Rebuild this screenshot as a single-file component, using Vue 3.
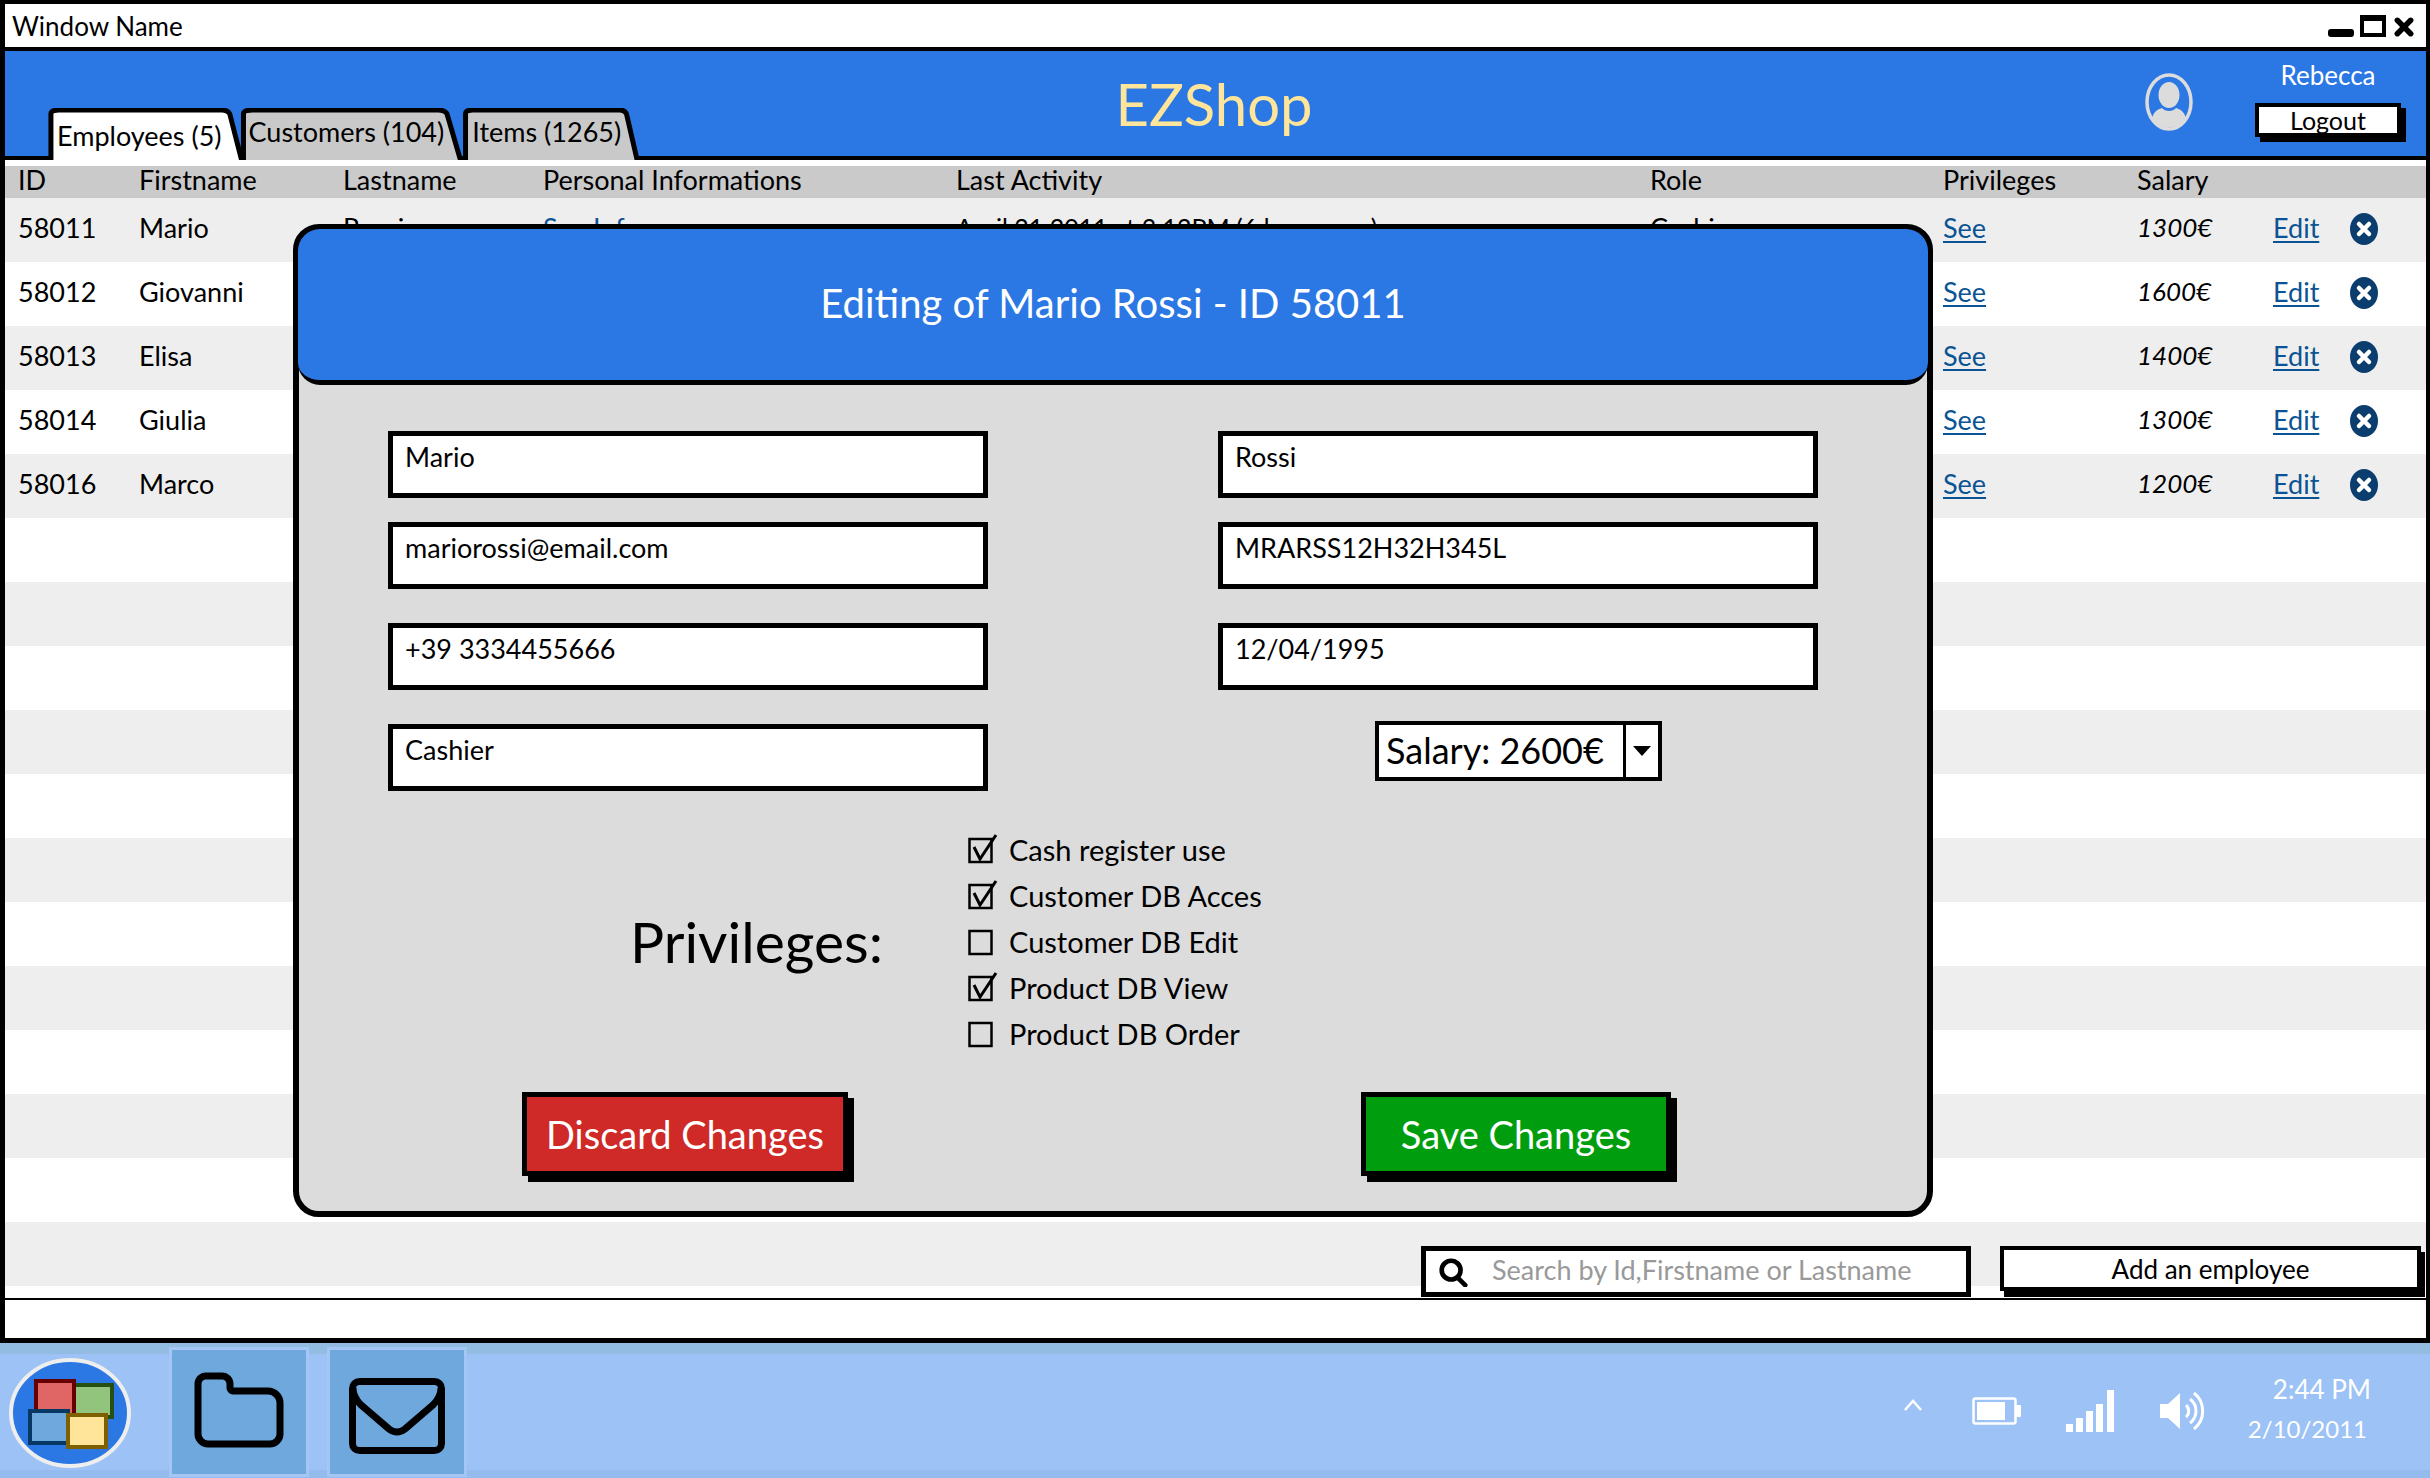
<script setup>
import { ref } from 'vue'

const tabs = ref([
  { label: 'Employees (5)', active: true },
  { label: 'Customers (104)', active: false },
  { label: 'Items (1265)', active: false }
])

const columns = ['ID', 'Firstname', 'Lastname', 'Personal Informations', 'Last Activity', 'Role', 'Privileges', 'Salary', '', '']

const employees = ref([
  { id: '58011', first: 'Mario', last: 'Rossi', info: 'See Info', activity: 'April 21 2011 at 3:12PM (6 hours ago)', role: 'Cashier', salary: '1300€' },
  { id: '58012', first: 'Giovanni', last: '', info: '', activity: '', role: '', salary: '1600€' },
  { id: '58013', first: 'Elisa', last: '', info: '', activity: '', role: '', salary: '1400€' },
  { id: '58014', first: 'Giulia', last: '', info: '', activity: '', role: '', salary: '1300€' },
  { id: '58016', first: 'Marco', last: '', info: '', activity: '', role: '', salary: '1200€' }
])

const emptyRows = 12

const fields = ['Mario', 'Rossi', 'mariorossi@email.com', 'MRARSS12H32H345L', '+39 3334455666', '12/04/1995', 'Cashier']

const privileges = ref([
  { label: 'Cash register use', checked: true },
  { label: 'Customer DB Acces', checked: true },
  { label: 'Customer DB Edit', checked: false },
  { label: 'Product DB View', checked: true },
  { label: 'Product DB Order', checked: false }
])
</script>

<template>
  <div class="page">
    <div class="window">
      <div class="titlebar">
        <span class="window-name">Window Name</span>
        <div class="controls">
          <span class="ctl-min"></span>
          <span class="ctl-max"></span>
          <svg class="ctl-close" viewBox="0 0 18 18"><path d="M3 3 15 15M15 3 3 15" stroke="#000" stroke-width="5" stroke-linecap="round" /></svg>
        </div>
      </div>

      <header class="header">
        <div class="tabs">
          <div v-for="tab in tabs" :key="tab.label" class="tab" :class="{ active: tab.active }">
            <svg class="tab-shape" viewBox="0 0 100 52" preserveAspectRatio="none">
              <path d="M2 52V6Q2 2 6 2H89Q92 2 93 6L99 52" :fill="tab.active ? '#fff' : '#c9c9c9'" stroke="#000" stroke-width="5" vector-effect="non-scaling-stroke" />
            </svg>
            <span class="tab-label">{{ tab.label }}</span>
          </div>
        </div>
        <h1 class="brand">EZShop</h1>
        <div class="account">
          <svg class="user" viewBox="0 0 48 58">
            <ellipse cx="24" cy="29" rx="22" ry="27" fill="none" stroke="#dcdcdc" stroke-width="3.5" />
            <ellipse cx="24" cy="22" rx="10.5" ry="13" fill="#dcdcdc" />
            <path d="M7 46C8 39 13 36 17 35 20 39 28 39 31 35 35 36 40 39 41 46 36 57 12 57 7 46Z" fill="#dcdcdc" />
          </svg>
          <div class="account-box">
            <span class="account-name">Rebecca</span>
            <button class="logout">Logout</button>
          </div>
        </div>
      </header>

      <div class="table">
        <div class="row head">
          <span v-for="(c, i) in columns" :key="i">{{ c }}</span>
        </div>
        <div v-for="e in employees" :key="e.id" class="row">
          <span>{{ e.id }}</span>
          <span>{{ e.first }}</span>
          <span>{{ e.last }}</span>
          <span class="link">{{ e.info }}</span>
          <span class="activity">{{ e.activity }}</span>
          <span>{{ e.role }}</span>
          <span class="link">See</span>
          <span class="salary">{{ e.salary }}</span>
          <span class="link">Edit</span>
          <svg class="remove" viewBox="0 0 28 32">
            <ellipse cx="14" cy="16" rx="14" ry="16" fill="#0b3d6e" />
            <path d="M9 11 19 21M19 11 9 21" stroke="#fff" stroke-width="4.5" stroke-linecap="round" />
          </svg>
        </div>
        <div v-for="n in emptyRows" :key="n" class="row"></div>
      </div>

      <div class="toolbar">
        <div class="search">
          <svg class="search-icon" viewBox="0 0 32 32">
            <circle cx="14" cy="14" r="10" fill="none" stroke="#000" stroke-width="5" />
            <path d="M21 22 29 30" stroke="#000" stroke-width="5" stroke-linecap="round" />
          </svg>
          <span>Search by Id,Firstname or Lastname</span>
        </div>
        <button class="add">Add an employee</button>
      </div>

      <div class="statusbar"></div>

      <section class="modal">
        <div class="modal-head">Editing of Mario Rossi - ID 58011</div>
        <div class="fields">
          <div v-for="f in fields" :key="f" class="field">{{ f }}</div>
          <div class="select">
            <span class="select-value">Salary: 2600€</span>
            <span class="select-arrow"></span>
          </div>
        </div>
        <div class="privileges">
          <h2>Privileges:</h2>
          <ul>
            <li v-for="p in privileges" :key="p.label">
              <svg class="check" viewBox="0 0 30 30">
                <rect x="1.5" y="5" width="22" height="23" fill="none" stroke="#000" stroke-width="2.5" />
                <path v-if="p.checked" d="M6 13 12 25 28 1" fill="none" stroke="#000" stroke-width="3" />
              </svg>
              <span>{{ p.label }}</span>
            </li>
          </ul>
        </div>
        <div class="actions">
          <button class="discard">Discard Changes</button>
          <button class="save">Save Changes</button>
        </div>
      </section>
    </div>

    <footer class="taskbar">
      <div class="start">
        <svg viewBox="0 0 124 112" preserveAspectRatio="none">
          <ellipse cx="62" cy="56" rx="59" ry="53" fill="#2b78e4" stroke="#eeeeee" stroke-width="4" />
          <rect x="64" y="28" width="40" height="32" fill="#93c47d" stroke="#274e13" stroke-width="4" />
          <rect x="28" y="24" width="38" height="38" fill="#e06666" stroke="#660000" stroke-width="4" />
          <rect x="22" y="54" width="38" height="32" fill="#6fa8dc" stroke="#073763" stroke-width="4" />
          <rect x="60" y="58" width="38" height="32" fill="#ffe599" stroke="#7f6000" stroke-width="4" />
        </svg>
      </div>
      <div class="launcher">
        <svg class="folder" viewBox="0 0 90 76">
          <path d="M12 4H28A8 8 0 0 1 36 12V16A3 3 0 0 0 39 19H74A12 12 0 0 1 86 31V62A10 10 0 0 1 76 72H14A10 10 0 0 1 4 62V12A8 8 0 0 1 12 4Z" fill="none" stroke="#000" stroke-width="7" />
        </svg>
      </div>
      <div class="launcher">
        <svg class="mail" viewBox="0 0 96 76">
          <rect x="3.5" y="3.5" width="89" height="69" rx="7" fill="none" stroke="#000" stroke-width="7" />
          <path d="M4 10C4 18 8 23 12 27L40 51Q48 57 56 51L84 27C88 23 92 18 92 10" fill="none" stroke="#000" stroke-width="7" />
        </svg>
      </div>
      <div class="tray">
        <svg class="tray-up" viewBox="0 0 20 14"><path d="M2 12 10 3 18 12" fill="none" stroke="#fff" stroke-width="2.5" /></svg>
        <svg class="tray-battery" viewBox="0 0 50 28">
          <rect x="1.5" y="1.5" width="42" height="25" rx="2" fill="none" stroke="#fff" stroke-width="2.5" />
          <rect x="5" y="5" width="28" height="18" fill="#fff" />
          <rect x="44" y="8" width="5" height="12" rx="1" fill="#fff" />
        </svg>
        <svg class="tray-signal" viewBox="0 0 48 42">
          <rect x="0" y="34" width="7" height="8" fill="#fff" />
          <rect x="10" y="28" width="7" height="14" fill="#fff" />
          <rect x="20" y="21" width="7" height="21" fill="#fff" />
          <rect x="30" y="14" width="7" height="28" fill="#fff" />
          <rect x="41" y="0" width="7" height="42" fill="#fff" />
        </svg>
        <svg class="tray-sound" viewBox="0 0 46 40">
          <path d="M0 13H8L20 2V38L8 27H0Z" fill="#fff" />
          <path d="M26 14A8 8 0 0 1 26 26M30 8A15 15 0 0 1 30 32M34 2A23 23 0 0 1 34 38" fill="none" stroke="#fff" stroke-width="3" />
        </svg>
        <div class="clock">
          <span>2:44 PM</span>
          <span class="clock-date">2/10/2011</span>
        </div>
      </div>
    </footer>
  </div>
</template>

<style>
html, body {
  margin: 0;
  background: #fff;
}
</style>

<style scoped>
* {
  box-sizing: border-box;
}

.page {
  width: 2430px;
  height: 1478px;
  display: flex;
  flex-direction: column;
  font-family: Lato, "Noto Sans", sans-serif;
  color: #000;
  overflow: hidden;
}

button {
  font-family: inherit;
  cursor: pointer;
  padding: 0;
}

.window {
  position: relative;
  height: 1343px;
  border: 5px solid #000;
  border-top-width: 4px;
  border-right-width: 4px;
  background: #fff;
  display: flex;
  flex-direction: column;
}

.titlebar {
  height: 43px;
  padding: 0 12px 0 7px;
  display: flex;
  align-items: center;
  justify-content: space-between;
  font-size: 26px;
}

.controls {
  display: flex;
  align-items: flex-end;
  gap: 6px;
}

.ctl-min {
  width: 26px;
  height: 8px;
  background: #000;
  border-radius: 3px;
}

.ctl-max {
  width: 26px;
  height: 22px;
  border: 4px solid #000;
  border-top-width: 6px;
}

.ctl-close {
  width: 20px;
  height: 20px;
  margin-left: 2px;
}

.header {
  box-sizing: content-box;
  height: 105px;
  background: #2b78e4;
  border-top: 4px solid #000;
  border-bottom: 4px solid #000;
  display: grid;
  grid-template-columns: 1fr auto 1fr;
  align-items: center;
}

.tabs {
  display: flex;
  align-self: end;
  padding-left: 42px;
  margin-bottom: -4px;
}

.tab {
  position: relative;
  height: 52px;
  display: flex;
  align-items: center;
  font-size: 27px;
  padding: 0 18px 5px 10px;
}

.tab.active {
  z-index: 1;
  padding: 3px 22px 0 10px;
  margin-right: -5px;
}

.tab-shape {
  position: absolute;
  inset: 0;
  width: 100%;
  height: 100%;
}

.tab-label {
  position: relative;
}

.brand {
  margin: 0 3px 0 0;
  font-size: 58px;
  font-weight: 400;
  color: #ffe599;
}

.account {
  align-self: start;
  display: flex;
  align-items: flex-start;
  justify-content: flex-end;
  gap: 62px;
  padding: 7px 25px 0 0;
}

.user {
  width: 48px;
  height: 58px;
  margin-top: 15px;
}

.account-box {
  display: flex;
  flex-direction: column;
  align-items: center;
  gap: 11px;
}

.account-name {
  color: #fff;
  font-size: 26px;
  line-height: 34px;
}

.logout {
  width: 146px;
  height: 34px;
  background: #fff;
  border: 4px solid #000;
  box-shadow: 5px 5px 0 #000;
  font-size: 25px;
  line-height: 24px;
}

.table {
  margin-top: 6px;
  display: flex;
  flex-direction: column;
}

.row {
  height: 64px;
  display: grid;
  grid-template-columns: 121px 204px 200px 413px 694px 293px 194px 136px 77px 40px;
  padding-left: 13px;
  padding-bottom: 6px;
  align-items: center;
  font-size: 27px;
}

.row:nth-child(even) {
  background: #eeeeee;
}

.row.head {
  height: 32px;
  padding-bottom: 0;
  align-items: start;
  line-height: 28px;
  background: #cacaca;
}

.link {
  color: #0b5394;
  text-decoration: underline;
  text-underline-offset: 3px;
}

.activity {
  font-size: 25px;
}

.salary {
  font-size: 26px;
  font-style: italic;
}

.remove {
  width: 28px;
  height: 32px;
  margin-top: 4px;
}

.toolbar {
  position: absolute;
  top: 1242px;
  right: 5px;
  display: flex;
  gap: 29px;
}

.search {
  width: 550px;
  height: 51px;
  background: #fff;
  border: 5px solid #000;
  display: flex;
  align-items: center;
  padding: 0 0 5px 12px;
  gap: 24px;
  color: #999;
  font-size: 27px;
}

.search-icon {
  width: 30px;
  height: 30px;
  margin-top: 5px;
}

.add {
  width: 421px;
  height: 45px;
  background: #fff;
  border: 4px solid #000;
  box-shadow: 4px 6px 0 #000;
  font-size: 26px;
}

.statusbar {
  margin-top: 12px;
  flex: 1;
  border-top: 2px solid #000;
}

.modal {
  position: absolute;
  left: 288px;
  top: 220px;
  width: 1640px;
  height: 993px;
  background: #dcdcdc;
  border: 6px solid #000;
  border-radius: 26px;
}

.modal-head {
  height: 156px;
  margin: -1px;
  background: #2b78e4;
  border-bottom: 5px solid #000;
  border-radius: 22px;
  color: #fff;
  font-size: 40px;
  display: flex;
  align-items: center;
  justify-content: center;
  padding-bottom: 4px;
}

.fields {
  display: grid;
  grid-template-columns: 600px 600px;
  grid-template-rows: 91px 101px 101px 66px;
  column-gap: 230px;
  align-items: start;
  padding: 47px 0 0 89px;
}

.field {
  height: 67px;
  background: #fff;
  border: 5px solid #000;
  padding: 4px 12px;
  font-size: 27px;
  line-height: 34px;
}

.select {
  width: 287px;
  height: 60px;
  margin: -3px 0 0 157px;
  background: #fff;
  border: 4px solid #000;
  display: flex;
  font-size: 36px;
}

.select-value {
  width: 247px;
  padding-left: 7px;
  line-height: 50px;
  border-right: 3px solid #000;
  white-space: nowrap;
}

.select-arrow {
  width: 0;
  height: 0;
  margin: 21px 0 0 7px;
  border: 9px solid transparent;
  border-top: 10px solid #000;
}

.privileges {
  margin-top: 36px;
  padding-left: 331px;
  display: flex;
  align-items: center;
}

.privileges h2 {
  margin: 0;
  width: 338px;
  font-size: 57px;
  font-weight: 400;
}

.privileges ul {
  margin: 0;
  padding: 0;
  list-style: none;
}

.privileges li {
  height: 46px;
  display: flex;
  align-items: center;
  gap: 11px;
  font-size: 29px;
}

.check {
  width: 30px;
  height: 30px;
}

.actions {
  margin-top: 36px;
  padding-left: 223px;
  display: flex;
  gap: 513px;
}

.actions button {
  height: 84px;
  border: 5px solid #000;
  box-shadow: 6px 6px 0 #000;
  color: #fff;
  font-size: 38px;
}

.discard {
  width: 326px;
  background: #cf2a27;
}

.save {
  width: 310px;
  background: #009e0f;
}

.taskbar {
  flex: 1;
  display: flex;
  align-items: flex-start;
  padding: 4px 59px 0 8px;
  background: linear-gradient(#93bce2 0 11px, #9dc2f5 11px 127px, #93bbee 127px);
}

.start {
  width: 124px;
  height: 112px;
  margin: 10px 37px 0 0;
}

.start svg {
  display: block;
  width: 100%;
  height: 100%;
}

.launcher {
  width: 140px;
  height: 130px;
  background: #6fa8dc;
  border: 3px solid #a4c6f5;
  margin-right: 18px;
  display: flex;
  align-items: center;
  justify-content: center;
}

.folder {
  width: 90px;
  height: 76px;
  margin-top: -5px;
}

.mail {
  width: 96px;
  height: 76px;
  margin-top: 8px;
}

.tray {
  margin-left: auto;
  height: 127px;
  display: flex;
  align-items: center;
  color: #fff;
}

.tray-up {
  width: 20px;
  height: 14px;
  margin-right: 49px;
  margin-bottom: 12px;
}

.tray-battery {
  width: 50px;
  height: 28px;
  margin-right: 44px;
}

.tray-signal {
  width: 48px;
  height: 42px;
  margin-right: 46px;
}

.tray-sound {
  width: 46px;
  height: 40px;
  margin-right: 42px;
}

.clock {
  display: flex;
  flex-direction: column;
  align-items: flex-end;
  gap: 12px;
  margin-top: -4px;
  font-size: 26px;
  line-height: 28px;
}

.clock-date {
  font-size: 24px;
  padding-right: 4px;
}
</style>
